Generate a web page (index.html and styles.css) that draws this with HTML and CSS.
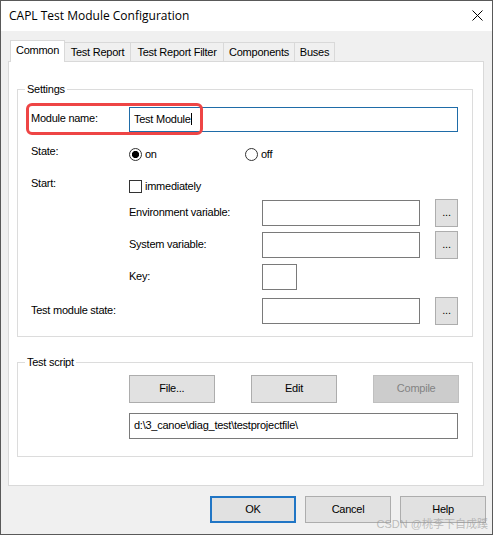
FILE: index.html
```html
<!DOCTYPE html>
<html>
<head>
<meta charset="utf-8">
<link rel="stylesheet" href="styles.css">
</head>
<body>
<div class="window">
  <div class="titlebar">
    <span class="title">CAPL Test Module Configuration</span>
    <svg class="close" width="11" height="11" viewBox="0 0 11 11"><path d="M0.5 0.5 L10.5 10.5 M10.5 0.5 L0.5 10.5" stroke="#000" stroke-width="1" fill="none"/></svg>
  </div>
  <div class="body">
    <div class="tabs">
      <div class="tab tab-active tab-common">Common</div>
      <div class="tab tab-report">Test Report</div>
      <div class="tab tab-filter">Test Report Filter</div>
      <div class="tab tab-comp">Components</div>
      <div class="tab tab-buses">Buses</div>
    </div>
    <div class="panel">
      <div class="group group-settings">
        <div class="group-title">Settings</div>
        <div class="row row-module">
          <span class="lbl">Module name:</span>
          <div class="input input-module focused"><span class="caret">Test Module</span></div>
        </div>
        <div class="row row-state">
          <span class="lbl lbl-up">State:</span>
          <span class="opt opt-on"><span class="radio checked"></span>on</span>
          <span class="opt"><span class="radio"></span>off</span>
        </div>
        <div class="row row-start">
          <span class="lbl lbl-up">Start:</span>
          <span class="opt"><span class="check"></span>immediately</span>
        </div>
        <div class="row row-env">
          <span class="lbl"></span>
          <span class="sublbl">Environment variable:</span>
          <div class="input input-var"></div>
          <button class="btn btn-dots">...</button>
        </div>
        <div class="row row-sys">
          <span class="lbl"></span>
          <span class="sublbl">System variable:</span>
          <div class="input input-var"></div>
          <button class="btn btn-dots">...</button>
        </div>
        <div class="row row-key">
          <span class="lbl"></span>
          <span class="sublbl">Key:</span>
          <div class="input input-key"></div>
        </div>
        <div class="row row-tms">
          <span class="lbl lbl-wide">Test module state:</span>
          <div class="input input-var"></div>
          <button class="btn btn-dots">...</button>
        </div>
      </div>
      <div class="group group-script">
        <div class="group-title">Test script</div>
        <div class="row row-buttons">
          <button class="btn btn-wide btn-file">File...</button>
          <button class="btn btn-wide btn-edit">Edit</button>
          <button class="btn btn-wide btn-compile" disabled>Compile</button>
        </div>
        <div class="row row-path">
          <div class="input input-path">d:\3_canoe\diag_test\testprojectfile\</div>
        </div>
      </div>
    </div>
  </div>
  <div class="footer">
    <button class="btn btn-foot btn-default">OK</button>
    <button class="btn btn-foot">Cancel</button>
    <button class="btn btn-foot">Help</button>
  </div>
  <div class="highlight"></div>
  <div class="watermark">CSDN @桃李下自成蹊</div>
</div>
</body>
</html>
```

FILE: styles.css
```css
html, body {
  margin: 0;
  padding: 0;
  background: #ffffff;
}

.window {
  position: relative;
  width: 493px;
  height: 535px;
  box-sizing: border-box;
  border: 1px solid #595959;
  background: #f0f0f0;
  font-family: "Liberation Sans", Arial, sans-serif;
  font-size: 11px;
  letter-spacing: -0.25px;
  color: #000;
  overflow: hidden;
}

.titlebar {
  height: 30px;
  background: #ffffff;
  display: flex;
  align-items: center;
  justify-content: space-between;
  padding: 0 9px 0 8px;
}

.title {
  font-family: "Open Sans", "Liberation Sans", sans-serif;
  font-size: 12px;
  letter-spacing: 0;
  margin-top: -1px;
}

.close {
  display: block;
  margin-top: -1px;
}

.body {
  padding: 9px 8px 0 7px;
}

.tabs {
  display: flex;
  align-items: flex-end;
  height: 22px;
  margin: 0 0 -1px 2px;
}

.tab {
  box-sizing: border-box;
  height: 19px;
  margin-bottom: 1px;
  margin-left: -1px;
  border: 1px solid #d9d9d9;
  border-bottom: none;
  background: #f0f0f0;
  display: flex;
  align-items: center;
  justify-content: center;
  white-space: nowrap;
}

.tab-active {
  position: relative;
  z-index: 1;
  height: 22px;
  margin-bottom: 0;
  margin-left: 0;
  background: #ffffff;
  padding-bottom: 3px;
}

.tab-common { width: 55px; }
.tab-report { width: 67px; }
.tab-filter { width: 94px; }
.tab-comp { width: 72px; }
.tab-buses { width: 41px; }

.panel {
  box-sizing: border-box;
  height: 425px;
  background: #ffffff;
  border: 1px solid #d9d9d9;
  padding-top: 27px;
}

.group {
  border: 1px solid #dcdcdc;
  margin: 0 10px 0 8px;
  padding: 0 13px 11px 13px;
}

.group-script {
  margin-top: 25px;
  padding-bottom: 17px;
}

.group-title {
  width: fit-content;
  height: 13px;
  line-height: 13px;
  margin: -7px 0 0 -6px;
  padding: 0 2px;
  background: #ffffff;
}

.row {
  display: flex;
  align-items: center;
}

.row-module { margin-top: 11px; height: 25px; }
.row-state { margin-top: 12px; height: 20px; }
.row-start { margin-top: 12px; height: 20px; }
.row-env { margin-top: 3px; height: 28px; }
.row-sys { margin-top: 4px; height: 28px; }
.row-key { margin-top: 5px; height: 26px; }
.row-tms { margin-top: 7px; height: 28px; }
.row-buttons { margin-top: 6px; height: 28px; padding-left: 98px; }
.row-path { margin-top: 10px; height: 26px; padding-left: 98px; }

.lbl {
  width: 98px;
  flex-shrink: 0;
  margin-bottom: 3px;
  white-space: nowrap;
}

.lbl-up {
  margin-bottom: 6px;
}

.lbl-wide {
  width: 231px;
}

.sublbl {
  width: 133px;
  flex-shrink: 0;
  margin-bottom: 3px;
  white-space: nowrap;
}

.input {
  box-sizing: border-box;
  background: #ffffff;
  border: 1px solid #7a7a7a;
  display: flex;
  align-items: center;
  padding-left: 4px;
  white-space: nowrap;
}

.input-module {
  width: 329px;
  height: 25px;
  padding-bottom: 2px;
}

.focused {
  border-color: #1f6ca8;
}

.caret {
  border-right: 1px solid #000;
  line-height: 12px;
  padding-right: 0;
}

.input-var {
  width: 158px;
  height: 26px;
}

.input-key {
  width: 35px;
  height: 26px;
}

.input-path {
  width: 329px;
  height: 26px;
  padding-bottom: 2px;
}

.opt {
  display: flex;
  align-items: center;
  gap: 3px;
}

.opt-on {
  width: 116px;
}

.radio {
  box-sizing: border-box;
  width: 13px;
  height: 13px;
  border-radius: 50%;
  border: 1px solid #333333;
  background: #ffffff;
}

.radio.checked {
  background: radial-gradient(circle, #000 0 3.3px, #ffffff 3.9px);
}

.check {
  box-sizing: border-box;
  width: 13px;
  height: 13px;
  border: 1px solid #333333;
  background: #ffffff;
}

.btn {
  box-sizing: border-box;
  margin: 0;
  padding: 0;
  background: #e1e1e1;
  border: 1px solid #adadad;
  font-family: inherit;
  font-size: 11px;
  letter-spacing: -0.25px;
  color: #000;
  display: flex;
  align-items: center;
  justify-content: center;
}

.btn-dots {
  width: 23px;
  height: 28px;
  margin-left: 15px;
  padding-bottom: 2px;
}

.btn-wide {
  width: 86px;
  height: 28px;
  padding-bottom: 2px;
}

.btn-edit {
  margin-left: 36px;
  width: 87px;
}

.btn-compile {
  margin-left: 36px;
  background: #cccccc;
  border-color: #bfbfbf;
  color: #838383;
}

.footer {
  display: flex;
  justify-content: flex-end;
  gap: 9px;
  padding: 10px 6px 0 0;
}

.btn-foot {
  width: 86px;
  height: 27px;
  padding-bottom: 1px;
}

.btn-default {
  border: 2px solid #2176c5;
}

.highlight {
  position: absolute;
  left: 25px;
  top: 102px;
  width: 177px;
  height: 32px;
  box-sizing: border-box;
  border: 3px solid #ee4545;
  border-radius: 6px;
}

.watermark {
  position: absolute;
  right: 4px;
  bottom: 3px;
  font-family: "Liberation Sans", "Noto Sans CJK SC", sans-serif;
  font-size: 11px;
  letter-spacing: 0;
  color: rgba(150, 150, 150, 0.6);
}
```
